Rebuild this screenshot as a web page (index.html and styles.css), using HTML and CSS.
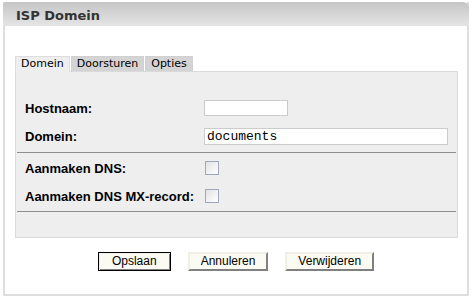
FILE: index.html
```html
<!DOCTYPE html>
<html>
<head>
<meta charset="utf-8">
<link rel="stylesheet" href="styles.css">
</head>
<body>
<div class="frame">
  <div class="header">ISP Domein</div>
  <div class="content">
    <div class="tabs">
      <div class="tab active">Domein</div>
      <div class="tab">Doorsturen</div>
      <div class="tab">Opties</div>
    </div>
    <div class="panel">
      <div class="row">
        <label class="label">Hostnaam:</label>
        <div class="field"><input class="text short" type="text" value=""></div>
      </div>
      <div class="row">
        <label class="label">Domein:</label>
        <div class="field"><input class="text long" type="text" value="documents"></div>
      </div>
      <div class="sep sep-first"></div>
      <div class="row">
        <label class="label">Aanmaken DNS:</label>
        <div class="field"><input class="check" type="checkbox"></div>
      </div>
      <div class="row">
        <label class="label">Aanmaken DNS MX-record:</label>
        <div class="field"><input class="check" type="checkbox"></div>
      </div>
      <div class="sep sep-last"></div>
    </div>
    <div class="buttons">
      <button class="btn default">Opslaan</button>
      <button class="btn">Annuleren</button>
      <button class="btn">Verwijderen</button>
    </div>
  </div>
</div>
</body>
</html>
```

FILE: styles.css
```css
html, body {
  margin: 0;
  padding: 0;
  background: #ffffff;
}

body {
  font-family: "Liberation Sans", Arial, sans-serif;
  color: #000;
}

.frame {
  margin: 2px 3px 0 3px;
  width: 466px;
  height: 294px;
  box-sizing: border-box;
  border: 2px solid #dedede;
  border-top: 0;
}

.header {
  margin: 0 -2px;
  height: 24px;
  box-sizing: border-box;
  padding: 3px 0 0 13px;
  line-height: 21px;
  font-family: "DejaVu Sans", Verdana, sans-serif;
  font-weight: bold;
  font-size: 13px;
  color: #333;
  background: linear-gradient(#c5c5c5, #e5e5e5);
  border-radius: 3px 6px 0 0;
}

.content {
  padding: 30px 9px 0 10px;
}

.tabs {
  display: flex;
  background: linear-gradient(#dadada, #dadada) left bottom / 100% 1px no-repeat;
}

.tab {
  font-family: "DejaVu Sans", Verdana, sans-serif;
  font-size: 11px;
  line-height: 14px;
  padding: 0 5px;
  margin-right: 1px;
  background: #d4d4d4;
  border: 1px solid #d0d0d0;
  border-bottom: 1px solid #dadada;
  color: #000;
}

.tab.active {
  background: #eeeeee;
  border-color: #dcdcdc;
  border-bottom-color: #eeeeee;
}

.panel {
  background: #eeeeee;
  border: 1px solid #dadada;
  border-top: 0;
  padding: 22px 0 25px 0;
}

.row {
  display: grid;
  grid-template-columns: 179px 1fr;
  align-items: center;
  height: 28px;
  padding-left: 9px;
}

.label {
  font-family: "Liberation Sans", Arial, sans-serif;
  font-weight: bold;
  font-size: 13px;
  color: #000;
  white-space: nowrap;
}

.field {
  display: flex;
  align-items: center;
}

.text {
  box-sizing: border-box;
  margin: 0;
  border: 1px solid #cccccc;
  background: #ffffff;
  font-family: "Liberation Mono", "Courier New", monospace;
  font-size: 13px;
  padding: 0 2px;
  color: #000;
  outline: none;
}

.text.short {
  width: 84px;
  height: 16px;
}

.text.long {
  width: 244px;
  height: 17px;
}

.check {
  -webkit-appearance: none;
  appearance: none;
  box-sizing: border-box;
  width: 14px;
  height: 14px;
  margin: 0 0 0 1px;
  border: 1px solid #9fa8b8;
  background: linear-gradient(135deg, #e2e2e2, #ffffff);
}

.sep {
  height: 1px;
  background: #8e8e8e;
  margin: 0 1px;
}

.sep-first {
  margin-top: 2px;
  margin-bottom: 1px;
}

.sep-last {
  margin-top: 1px;
}

.buttons {
  display: flex;
  justify-content: center;
  gap: 17px;
  margin-top: 14px;
  padding-right: 1px;
}

.btn {
  box-sizing: border-box;
  height: 19px;
  margin: 0;
  padding: 0 11px;
  font-family: "Liberation Sans", Arial, sans-serif;
  font-size: 12px;
  line-height: 15px;
  color: #000;
  background: #fbfbf3;
  border: 2px solid;
  border-color: #f0efe6 #808080 #808080 #f0efe6;
}

.btn.default {
  border: 1px solid #000;
  box-shadow: inset 1px 1px 0 #f0efe6, inset -1px -1px 0 #808080;
  padding: 0 13px;
}
```
